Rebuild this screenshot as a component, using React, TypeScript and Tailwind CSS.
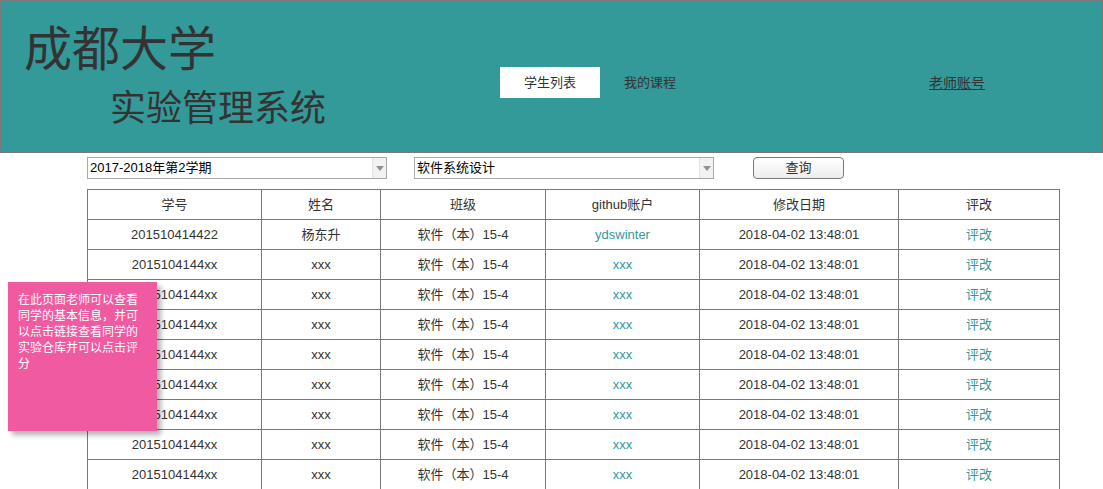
import React from 'react';

const rows = [
  { id: '201510414422', name: '杨东升', cls: '软件（本）15-4', gh: 'ydswinter', date: '2018-04-02 13:48:01' },
  ...Array.from({ length: 8 }, () => ({
    id: '2015104144xx',
    name: 'xxx',
    cls: '软件（本）15-4',
    gh: 'xxx',
    date: '2018-04-02 13:48:01',
  })),
];

const cols = ['w-[174px]', 'w-[119px]', 'w-[165px]', 'w-[154px]', 'w-[199px]', 'w-[161px]'];

function Select({ value }: { value: string }) {
  return (
    <div className="flex h-[22px] w-[300px] border border-[#a9a9a9] bg-white">
      <div className="flex-1 truncate pl-[2px] text-[13px] leading-[20px] text-black">{value}</div>
      <div className="flex w-[14px] items-center justify-center border-l border-[#e3e3e3] bg-[#f2f2f2]">
        <svg width="8" height="5" viewBox="0 0 8 5">
          <path d="M0 0h8L4 5z" fill="#909090" />
        </svg>
      </div>
    </div>
  );
}

export default function App() {
  return (
    <div className="relative h-[489px] w-[1103px] overflow-hidden bg-white font-['Liberation_Sans','Noto_Sans_CJK_SC',sans-serif] text-[#333]">
      {/* Header */}
      <div className="flex h-[153px] border border-[#797979] bg-[#339999]">
        <div className="w-[499px] shrink-0 pl-[23px] pt-[25px]">
          <div className="text-[48px] leading-[48px]">成都大学</div>
          <div className="ml-[86px] mt-[16px] text-[36px] leading-[38px]">实验管理系统</div>
        </div>
        <div className="mt-[66px] flex h-[31px] items-center text-[13px]">
          <div className="flex h-[31px] w-[100px] items-center justify-center bg-white">学生列表</div>
          <div className="ml-[24px]">我的课程</div>
        </div>
        <div className="ml-auto mr-[117px] mt-[67px] flex h-[31px] items-center text-[14px] underline">老师账号</div>
      </div>

      {/* Filters */}
      <div className="ml-[87px] mt-[4px] flex items-center">
        <Select value="2017-2018年第2学期" />
        <div className="ml-[27px]">
          <Select value="软件系统设计" />
        </div>
        <button className="ml-[39px] h-[22px] w-[91px] rounded-[4px] border border-[#797979] bg-gradient-to-b from-white to-[#ededed] text-[13px] text-[#333]">
          查询
        </button>
      </div>

      {/* Table */}
      <table className="ml-[87px] mt-[10px] table-fixed border-collapse text-center text-[13px]">
        <thead>
          <tr className="h-[30px]">
            {['学号', '姓名', '班级', 'github账户', '修改日期', '评改'].map((h, i) => (
              <th key={h} className={`${cols[i]} border border-[#797979] font-normal`}>
                {h}
              </th>
            ))}
          </tr>
        </thead>
        <tbody>
          {rows.map((r, i) => (
            <tr key={i} className="h-[30px]">
              <td className="border border-[#797979]">{r.id}</td>
              <td className="border border-[#797979]">{r.name}</td>
              <td className="border border-[#797979]">{r.cls}</td>
              <td className="border border-[#797979] text-[#339999]">{r.gh}</td>
              <td className="border border-[#797979]">{r.date}</td>
              <td className="border border-[#797979] text-[#339999]">评改</td>
            </tr>
          ))}
        </tbody>
      </table>

      {/* Sticky note */}
      <div className="absolute left-[8px] top-[282px] h-[149px] w-[149px] bg-[#f05aa0] px-[10px] pt-[10px] text-[12px] leading-[16px] text-white shadow-[4px_4px_5px_rgba(0,0,0,0.3)]">
        在此页面老师可以查看同学的基本信息，并可以点击链接查看同学的实验仓库并可以点击评分
      </div>
    </div>
  );
}
